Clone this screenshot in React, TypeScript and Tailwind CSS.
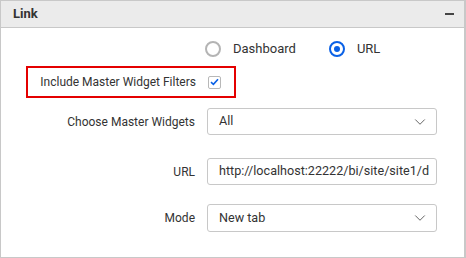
import { ChevronDown } from 'lucide-react';

function Radio({ checked, label }: { checked?: boolean; label: string }) {
  return (
    <div className="flex items-center gap-[12px]">
      <span
        className={
          checked
            ? 'w-[16px] h-[16px] rounded-full border-2 border-[#0a61e6] flex items-center justify-center'
            : 'w-[16px] h-[16px] rounded-full border-2 border-[#b4b4b4]'
        }
      >
        {checked && <span className="w-[6px] h-[6px] rounded-full bg-[#0a61e6]" />}
      </span>
      <span>{label}</span>
    </div>
  );
}

function Field({ label, value, select, tall }: { label: string; value: string; select?: boolean; tall?: boolean }) {
  return (
    <div className="flex items-center gap-[12px]">
      <span className="w-[194px] text-right text-[12px] whitespace-nowrap">{label}</span>
      <div
        className={
          (tall ? 'h-[28px] ' : 'h-[27px] ') +
          'w-[230px] border border-[#c8c8c8] rounded-[3px] flex items-center pl-[11px] pr-[7px] overflow-hidden'
        }
      >
        <span className="flex-1 whitespace-nowrap overflow-hidden text-[12.6px]">{value}</span>
        {select && <ChevronDown size={18} strokeWidth={1.2} className="text-[#555] shrink-0" />}
      </div>
    </div>
  );
}

export default function App() {
  return (
    <div className="w-[466px] h-[258px] bg-white border border-r-2 border-[#c8c8c8] font-['Roboto','Liberation_Sans',sans-serif] text-[13px] text-[#333]">
      {/* header */}
      <div className="h-[27px] bg-[#ebebeb] border-b border-[#c8c8c8] flex items-center justify-between pl-[12px] pr-[10px]">
        <span className="font-bold">Link</span>
        <span className="w-[9px] h-[2px] bg-[#444]" />
      </div>

      {/* link type */}
      <div className="flex items-center gap-[33px] h-[16px] mt-[13px] ml-[204px]">
        <Radio label="Dashboard" />
        <Radio checked label="URL" />
      </div>

      {/* highlighted option */}
      <div className="mt-[9px] ml-[25px] w-[210px] h-[32px] border-2 border-[#e40000] flex items-center justify-end gap-[12px] pr-[13px]">
        <span className="text-[12px] whitespace-nowrap">Include Master Widget Filters</span>
        <span className="w-[13px] h-[13px] border border-[#b8b8b8] rounded-[2px] flex items-center justify-center">
          <svg width="9" height="8" viewBox="0 0 9 8">
            <path d="M1 4.2 L3.4 6.4 L8 1.2" fill="none" stroke="#0a61e6" strokeWidth="1.6" />
          </svg>
        </span>
      </div>

      <div className="mt-[10px]">
        <Field label="Choose Master Widgets" value="All" select />
      </div>
      <div className="mt-[23px]">
        <Field label="URL" value="http://localhost:22222/bi/site/site1/dashboards" />
      </div>
      <div className="mt-[19px]">
        <Field label="Mode" value="New tab" select tall />
      </div>
    </div>
  );
}
